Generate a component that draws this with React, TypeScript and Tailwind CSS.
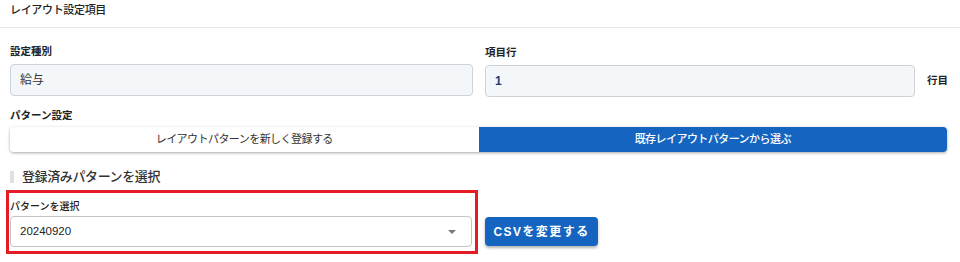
import React from 'react';

const font = "font-['Liberation_Sans','Noto_Sans_CJK_JP',sans-serif]";

function Label({ children, className = '' }: { children: React.ReactNode; className?: string }) {
  return <div className={`h-[14px] leading-[14px] text-[10.5px] font-bold text-[#222] ${className}`}>{children}</div>;
}

export default function App() {
  return (
    <div className={`w-[960px] h-[262px] overflow-hidden bg-white text-[#333] ${font}`}>
      {/* header */}
      <div className="h-[28px] border-b border-[#e8e8e8] px-[10px] text-[11px] leading-[20px] font-medium text-[#222] tracking-[-0.03em]">
        レイアウト設定項目
      </div>

      <div className="pl-[10px] w-[947px]">
        {/* row 1 */}
        <div className="flex pt-[16px]">
          <div className="w-[463px] shrink-0">
            <Label>設定種別</Label>
            <div className="mt-[6px] h-[32px] rounded-[4px] border border-[#cfd3d7] bg-[#f4f7fa] pl-[9px] flex items-center text-[12px] text-[#333]">
              給与
            </div>
          </div>
          <div className="ml-[12px] pt-[1px] shrink-0">
            <Label>項目行</Label>
            <div className="mt-[6px] flex items-center whitespace-nowrap">
              <div className="w-[430px] h-[32px] shrink-0 rounded-[4px] border border-[#cfd3d7] bg-[#f4f7fa] pl-[9px] flex items-center text-[12px] font-bold text-[#1f3b6e]">
                1
              </div>
              <span className="ml-[12px] text-[10.5px] font-bold text-[#222]">行目</span>
            </div>
          </div>
        </div>

        {/* pattern setting */}
        <Label className="mt-[11px]">パターン設定</Label>
        <div className="mt-[5px] flex h-[25px] rounded-[4px] shadow-[0_1px_3px_rgba(0,0,0,0.35)] text-[11px] tracking-[-0.05em]">
          <div className="flex-1 flex items-center justify-center bg-white rounded-l-[4px] text-[#333]">
            レイアウトパターンを新しく登録する
          </div>
          <div className="flex-1 flex items-center justify-center bg-[#1565c0] rounded-r-[4px] text-white font-medium">
            既存レイアウトパターンから選ぶ
          </div>
        </div>

        {/* section heading */}
        <div className="mt-[15px] flex items-center h-[20px]">
          <div className="w-[4px] h-[12px] bg-[#e0e0e0]" />
          <div className="ml-[8px] text-[13px] font-medium text-[#333] leading-[20px] tracking-[-0.03em]">登録済みパターンを選択</div>
        </div>

        {/* select row */}
        <div className="mt-[3px] flex items-end">
          <div className="-ml-[4px] w-[472px] border-[3px] border-[#e51c23] pl-[1px] pr-[3px] pt-[7px] pb-[4px]">
            <div className="h-[14px] leading-[14px] text-[10px] font-medium text-[#222]">パターンを選択</div>
            <div className="mt-[2px] h-[31px] rounded-[4px] border border-[#c4c4c4] bg-white pl-[9px] pr-[15px] flex items-center justify-between">
              <span className="text-[11.5px] text-[#222]">20240920</span>
              <svg width="8" height="4" viewBox="0 0 8 4">
                <polygon points="0,0 8,0 4,4" fill="#777" />
              </svg>
            </div>
          </div>
          <button className="ml-[7px] mb-[8px] w-[113px] h-[29px] rounded-[4px] bg-[#1565c0] text-white text-[12px] font-bold tracking-[0.12em] shadow-[0_2px_3px_rgba(0,0,0,0.3)]">
            CSVを変更する
          </button>
        </div>
      </div>
    </div>
  );
}
